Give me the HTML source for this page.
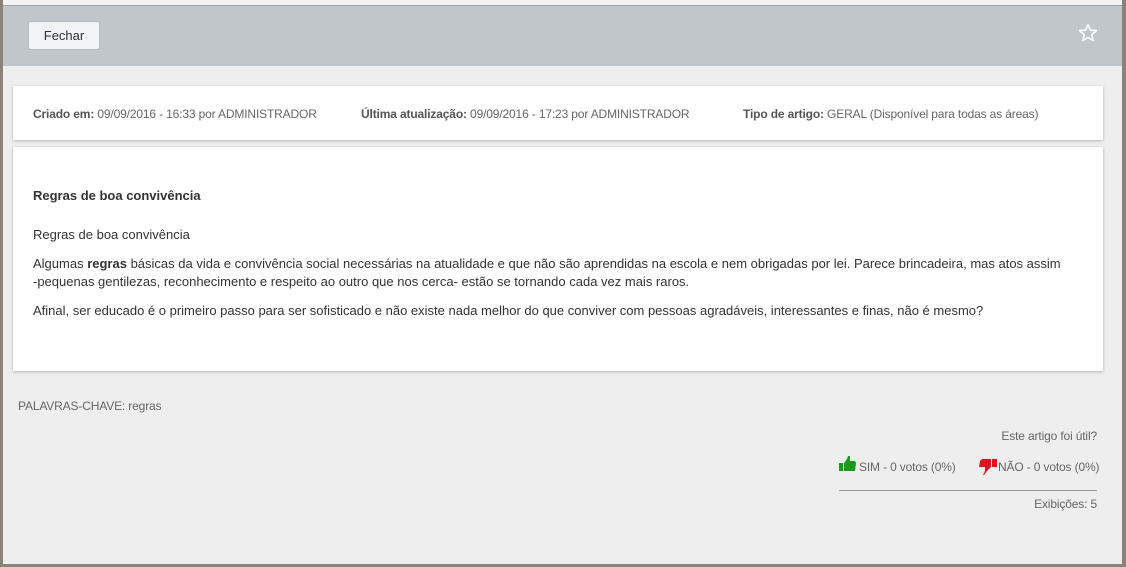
<!DOCTYPE html>
<html><head><meta charset="utf-8"><style>
body{margin:0;width:1126px;height:567px;overflow:hidden;background:#8a8478;font-family:"Liberation Sans",sans-serif;position:relative}
.win{position:absolute;left:3px;top:0;width:1119px;height:564px;background:#eeeeee}
.top{position:absolute;left:0;top:0;width:1119px;height:6px;background:#f4f4f4;border-bottom:1px solid #9aa3ab;box-sizing:border-box}
.hdr{position:absolute;left:0;top:6px;width:1119px;height:60px;background:#c0c6c9}
.btn{position:absolute;left:25px;top:15px;width:72px;height:29px;background:#f2f3f4;border:1px solid #b4b9bd;border-radius:3px;box-sizing:border-box;font-size:13px;color:#333;text-align:center;line-height:27px}
.card{position:absolute;left:10px;width:1090px;background:#fff;box-shadow:0 1px 3px rgba(0,0,0,.25)}
.meta{top:86px;height:54px;font-size:12px;color:#666;letter-spacing:-0.15px}
.meta span{position:absolute;top:21px;white-space:nowrap}
.meta b{color:#555}
.art{top:147px;height:224px;font-size:13px;color:#333}
.art p{position:absolute;left:20px;margin:0;width:1045px;line-height:18px}
.s{font-size:12px;color:#666;position:absolute;white-space:nowrap;letter-spacing:-0.15px}
</style></head><body>
<div class="win">
<div class="top"></div>
<div class="hdr"><div class="btn">Fechar</div>
<svg style="position:absolute;left:1075px;top:17px" width="20" height="20" viewBox="0 0 20 20"><path d="M10 1.5l2.4 5.6 6 .5-4.6 4 1.4 5.9L10 14.4l-5.2 3.1 1.4-5.9-4.6-4 6-.5z" fill="none" stroke="#fff" stroke-width="1.6" stroke-linejoin="round"/></svg>
</div>
<div class="card meta">
<span style="left:20px"><b>Criado em:</b> 09/09/2016 - 16:33 por ADMINISTRADOR</span>
<span style="left:348px"><b>Última atualização:</b> 09/09/2016 - 17:23 por ADMINISTRADOR</span>
<span style="left:730px"><b>Tipo de artigo:</b> GERAL (Disponível para todas as áreas)</span>
</div>
<div class="card art">
<p style="top:40px;font-weight:bold">Regras de boa convivência</p>
<p style="top:79px">Regras de boa convivência</p>
<p style="top:108px">Algumas <b>regras</b> básicas da vida e convivência social necessárias na atualidade e que não são aprendidas na escola e nem obrigadas por lei. Parece brincadeira, mas atos assim<br>-pequenas gentilezas, reconhecimento e respeito ao outro que nos cerca- estão se tornando cada vez mais raros.</p>
<p style="top:155px">Afinal, ser educado é o primeiro passo para ser sofisticado e não existe nada melhor do que conviver com pessoas agradáveis, interessantes e finas, não é mesmo?</p>
</div>
<div class="s" style="left:15px;top:399px">PALAVRAS-CHAVE: regras</div>
<div class="s" style="right:25px;top:429px">Este artigo foi útil?</div>
<svg style="position:absolute;left:836px;top:456px" width="17" height="15" viewBox="0 0 17 15"><path d="M0 7h4v8H0zM5 7l3-4 1-3h2v5h5l1 2-1 8H5z" fill="#1a9a1a"/></svg>
<div class="s" style="left:856px;top:460px">SIM - 0 votos (0%)</div>
<svg style="position:absolute;left:976px;top:459px" width="18" height="16" viewBox="0 0 18 16"><path d="M13 0h5v8h-5zM12 0H3L1 2 0 8h6v4l-2 4h1l3-4 4-4z" fill="#e0141e"/></svg>
<div class="s" style="left:995px;top:460px">NÃO - 0 votos (0%)</div>
<div style="position:absolute;left:836px;top:490px;width:258px;height:1px;background:#999"></div>
<div class="s" style="right:25px;top:497px">Exibições: 5</div>
</div>
</body></html>
